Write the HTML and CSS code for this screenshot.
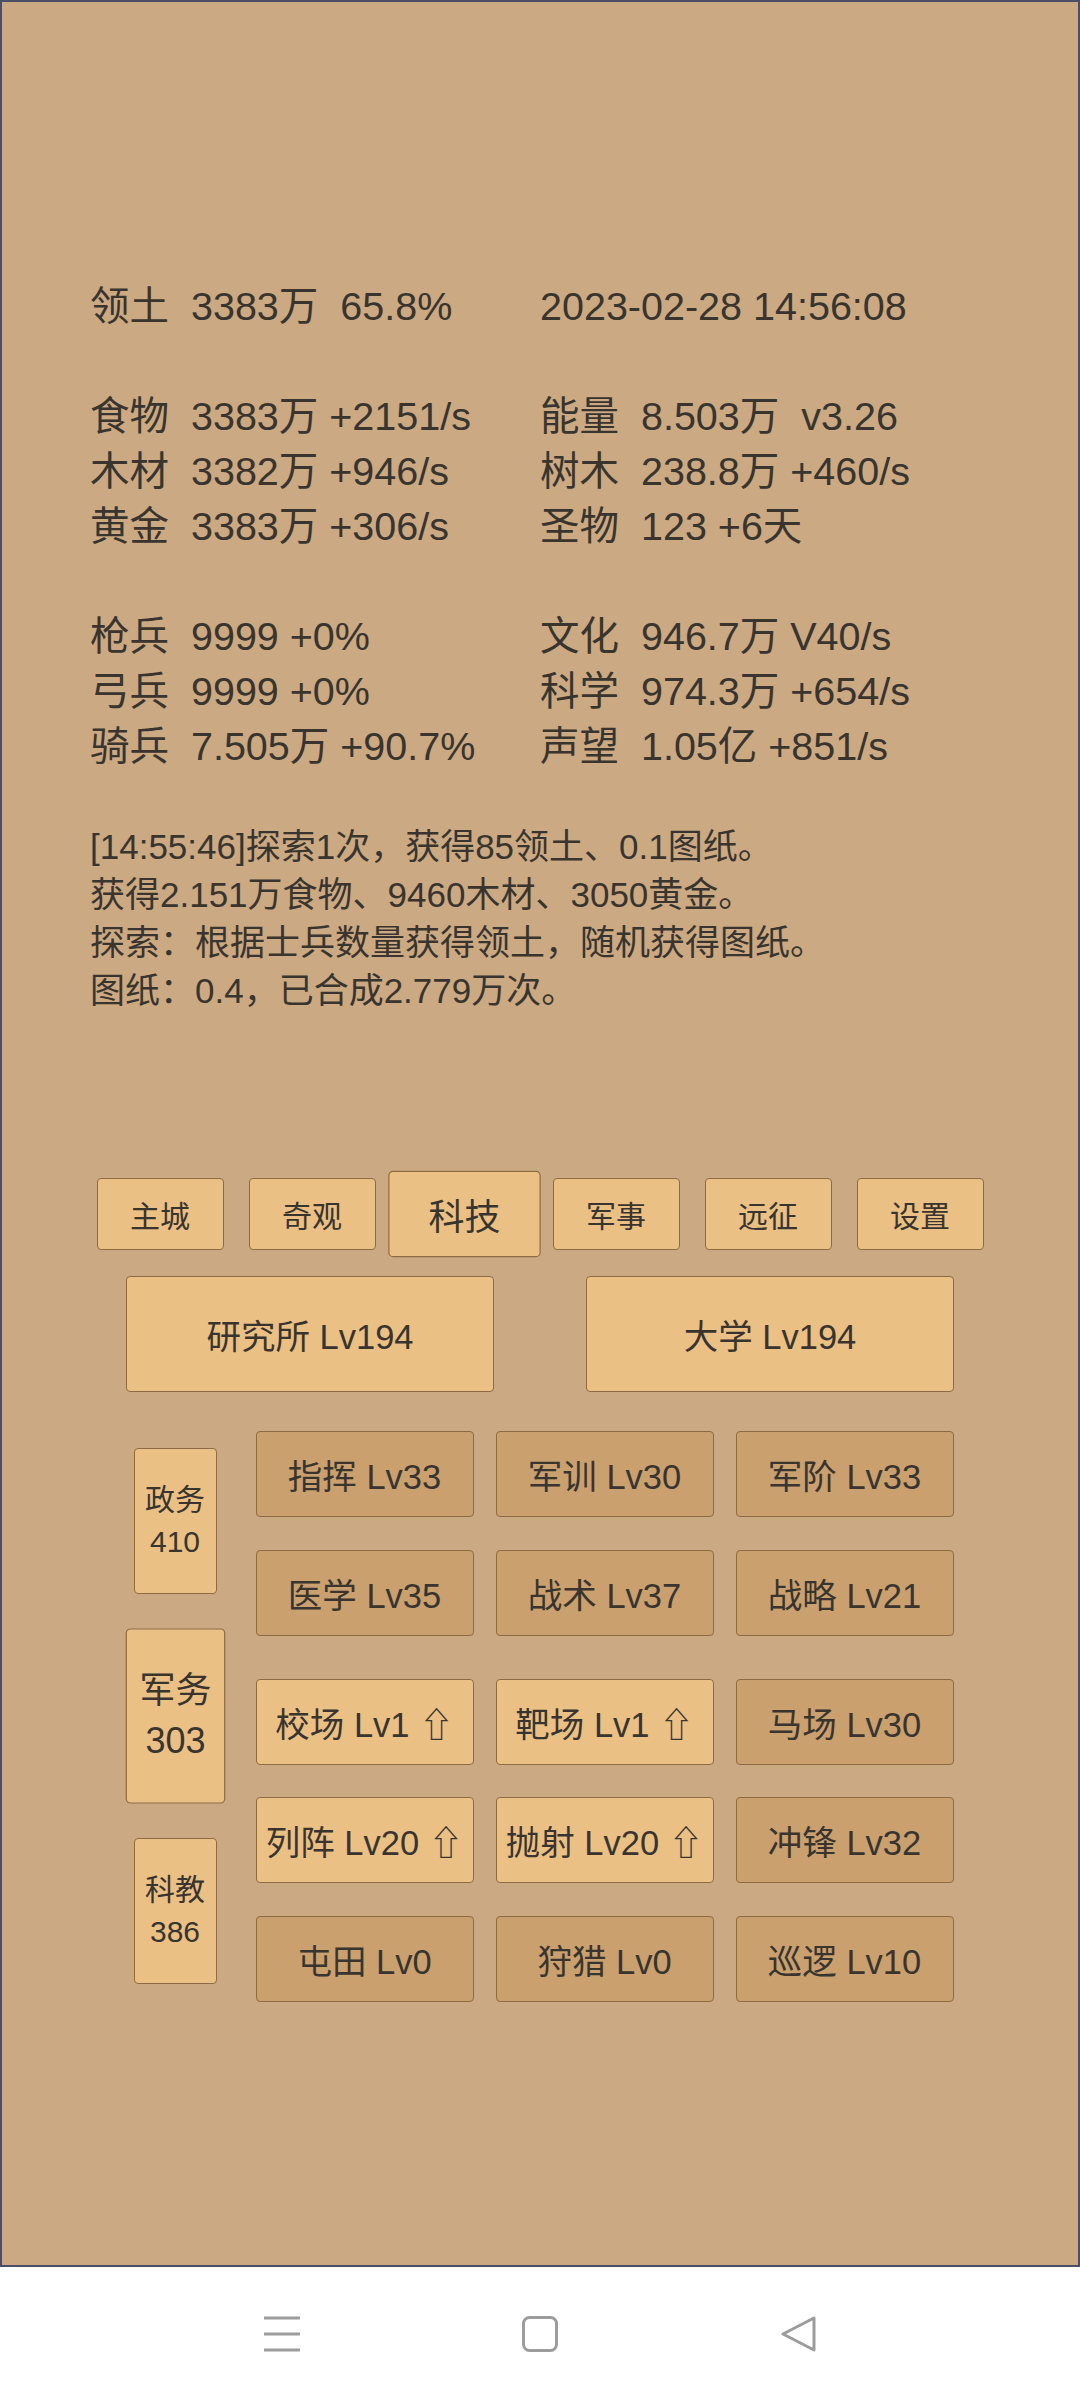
FILE: index.html
```html
<!DOCTYPE html>
<html lang="zh-CN">
<head>
<meta charset="utf-8">
<title>领土</title>
<link rel="stylesheet" href="styles.css">
</head>
<body>
<div class="app">
  <section class="stats">
    <div class="group">
      <div class="s">领土  3383万  65.8%</div>
      <div class="s">2023-02-28 14:56:08</div>
    </div>
    <div class="group">
      <div class="s">食物  3383万 +2151/s</div>
      <div class="s">能量  8.503万  v3.26</div>
      <div class="s">木材  3382万 +946/s</div>
      <div class="s">树木  238.8万 +460/s</div>
      <div class="s">黄金  3383万 +306/s</div>
      <div class="s">圣物  123 +6天</div>
    </div>
    <div class="group">
      <div class="s">枪兵  9999 +0%</div>
      <div class="s">文化  946.7万 V40/s</div>
      <div class="s">弓兵  9999 +0%</div>
      <div class="s">科学  974.3万 +654/s</div>
      <div class="s">骑兵  7.505万 +90.7%</div>
      <div class="s">声望  1.05亿 +851/s</div>
    </div>
  </section>

  <section class="log">
    <p>[14:55:46]探索1次，获得85领土、0.1图纸。</p>
    <p>获得2.151万食物、9460木材、3050黄金。</p>
    <p>探索：根据士兵数量获得领土，随机获得图纸。</p>
    <p>图纸：0.4，已合成2.779万次。</p>
  </section>

  <nav class="tabs">
    <div class="tab">主城</div>
    <div class="tab">奇观</div>
    <div class="tab active">科技</div>
    <div class="tab">军事</div>
    <div class="tab">远征</div>
    <div class="tab">设置</div>
  </nav>

  <div class="buildings">
    <div class="bld">研究所 Lv194</div>
    <div class="bld">大学 Lv194</div>
  </div>

  <div class="lower">
    <div class="side">
      <div class="sbtn"><span>政务</span><span>410</span></div>
      <div class="sbtn active"><span>军务</span><span>303</span></div>
      <div class="sbtn"><span>科教</span><span>386</span></div>
    </div>
    <div class="grids">
      <div class="grid">
        <div class="cell">指挥 Lv33</div>
        <div class="cell">军训 Lv30</div>
        <div class="cell">军阶 Lv33</div>
        <div class="cell">医学 Lv35</div>
        <div class="cell">战术 Lv37</div>
        <div class="cell">战略 Lv21</div>
      </div>
      <div class="grid grid2">
        <div class="cell up">校场 Lv1 ⇧</div>
        <div class="cell up">靶场 Lv1 ⇧</div>
        <div class="cell">马场 Lv30</div>
        <div class="cell up">列阵 Lv20 ⇧</div>
        <div class="cell up">抛射 Lv20 ⇧</div>
        <div class="cell">冲锋 Lv32</div>
        <div class="cell">屯田 Lv0</div>
        <div class="cell">狩猎 Lv0</div>
        <div class="cell">巡逻 Lv10</div>
      </div>
    </div>
  </div>
</div>

<div class="sysnav">
  <svg class="ico" viewBox="0 0 36 36" width="36" height="36">
    <path d="M0 2 H36 M0 18 H36 M0 34 H36" fill="none" stroke="#9c9c9c" stroke-width="3"/>
  </svg>
  <svg class="ico" viewBox="0 0 36 36" width="36" height="36">
    <rect x="1.5" y="1.5" width="33" height="33" rx="6" fill="none" stroke="#9c9c9c" stroke-width="3"/>
  </svg>
  <svg class="ico" viewBox="0 0 36 36" width="36" height="36">
    <path d="M34 2 L34 34 L3 18 Z" fill="none" stroke="#9c9c9c" stroke-width="3" stroke-linejoin="round"/>
  </svg>
</div>
</body>
</html>
```

FILE: styles.css
```css
* {
  box-sizing: border-box;
}

html,
body {
  margin: 0;
  padding: 0;
}

body {
  width: 1080px;
  height: 2400px;
  background: #ffffff;
  font-family: "Liberation Sans", "Noto Sans CJK SC", sans-serif;
  color: #3a342e;
  overflow: hidden;
}

.app {
  height: 2267px;
  border: 2px solid #4b4e66;
  background: #cba982;
  padding-top: 277px;
  overflow: hidden;
}

/* stats */
.stats {
  padding-left: 88px;
  font-size: 39.5px;
  line-height: 55px;
}

.group {
  display: grid;
  grid-template-columns: 450px auto;
}

.group + .group {
  margin-top: 55px;
}

.s {
  white-space: pre;
}

/* log */
.log {
  margin-top: 49px;
  padding-left: 88px;
  font-size: 35px;
  line-height: 48px;
}

.log p {
  margin: 0;
  white-space: nowrap;
}

/* tabs */
.tabs {
  margin-top: 163px;
  display: flex;
  justify-content: center;
  gap: 25px;
}

.tab,
.bld,
.sbtn,
.cell {
  border: 1px solid #8d6b44;
  border-radius: 4px;
  background: #eac085;
  display: flex;
  align-items: center;
  justify-content: center;
  white-space: nowrap;
}

.tab {
  width: 127px;
  height: 72px;
  font-size: 30px;
}

.tab.active,
.sbtn.active {
  transform: scale(1.2);
}

/* buildings */
.buildings {
  margin-top: 26px;
  display: flex;
  justify-content: center;
  gap: 92px;
}

.bld {
  width: 368px;
  height: 116px;
  font-size: 34.5px;
}

/* lower section */
.lower {
  width: 827px;
  margin: 39px auto 0;
  display: flex;
  align-items: center;
}

.side {
  width: 97px;
  flex: none;
  display: flex;
  flex-direction: column;
  align-items: center;
  gap: 49px;
}

.sbtn {
  width: 83px;
  height: 146px;
  flex-direction: column;
  font-size: 30px;
  line-height: 42px;
}

.grids {
  margin-left: 32px;
}

.grid {
  display: grid;
  grid-template-columns: repeat(3, 218px);
  column-gap: 22px;
  row-gap: 32.5px;
}

.grid2 {
  margin-top: 43px;
}

.cell {
  height: 86px;
  background: #c9a06e;
  font-size: 34.5px;
}

.cell.up {
  background: #eac085;
}

/* system navigation bar */
.sysnav {
  height: 133px;
  display: flex;
  align-items: center;
  justify-content: center;
  gap: 222px;
  background: #ffffff;
}

.ico {
  display: block;
}
```
